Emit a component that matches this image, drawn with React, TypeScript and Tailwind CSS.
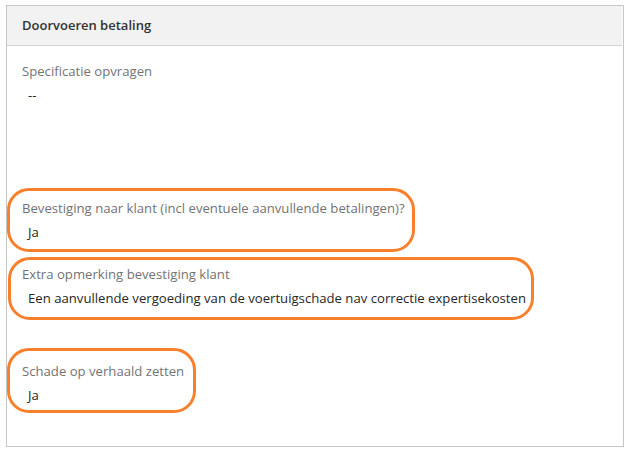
import React from "react";

type FieldProps = {
  label: string;
  value: string;
  className?: string;
  mark?: string; // position classes of the orange annotation ring
};

const Field = ({ label, value, className, mark }: FieldProps) => (
  <div className={`relative w-fit ${className ?? ""}`}>
    <div className="h-5 leading-5 text-[13.15px] text-[#737373] whitespace-nowrap">{label}</div>
    <div className="mt-1 h-5 pl-[6px] leading-5 text-[13.15px] text-[#262626] whitespace-nowrap">{value}</div>
    {mark && (
      <div className={`pointer-events-none absolute rounded-[22px] border-[3px] border-[#f8802c] ${mark}`} />
    )}
  </div>
);

export default function App() {
  return (
    <div className="min-h-[453px] w-[630px] bg-white pl-[6px] pt-[5px] font-['Open_Sans',sans-serif]">
      <div className="flex h-[442px] w-[618px] flex-col border border-[#c6c6c6] bg-white">
        <div className="mr-[1px] flex h-[40px] items-center border-b border-[#d2d2d2] bg-[#f2f2f2] px-[15px]">
          <span className="text-[13px] font-semibold text-[#333]">Doorvoeren betaling</span>
        </div>
        <div className="flex flex-col px-[15px] pt-[15px]">
          <Field label="Specificatie opvragen" value="--" />
          <Field
            className="mt-[93px]"
            label="Bevestiging naar klant (incl eventuele aanvullende betalingen)?"
            value="Ja"
            mark="-top-[10px] -bottom-[10px] -left-[15px] -right-[10px]"
          />
          <Field
            className="mt-[22px]"
            label="Extra opmerking bevestiging klant"
            value="Een aanvullende vergoeding van de voertuigschade nav correctie expertisekosten"
            mark="-top-[7px] -bottom-[12px] -left-[14px] -right-[8px]"
          />
          <Field
            className="mt-[53px]"
            label="Schade op verhaald zetten"
            value="Ja"
            mark="-top-[13px] -bottom-[8px] -left-[15px] -right-[12px]"
          />
        </div>
      </div>
    </div>
  );
}
